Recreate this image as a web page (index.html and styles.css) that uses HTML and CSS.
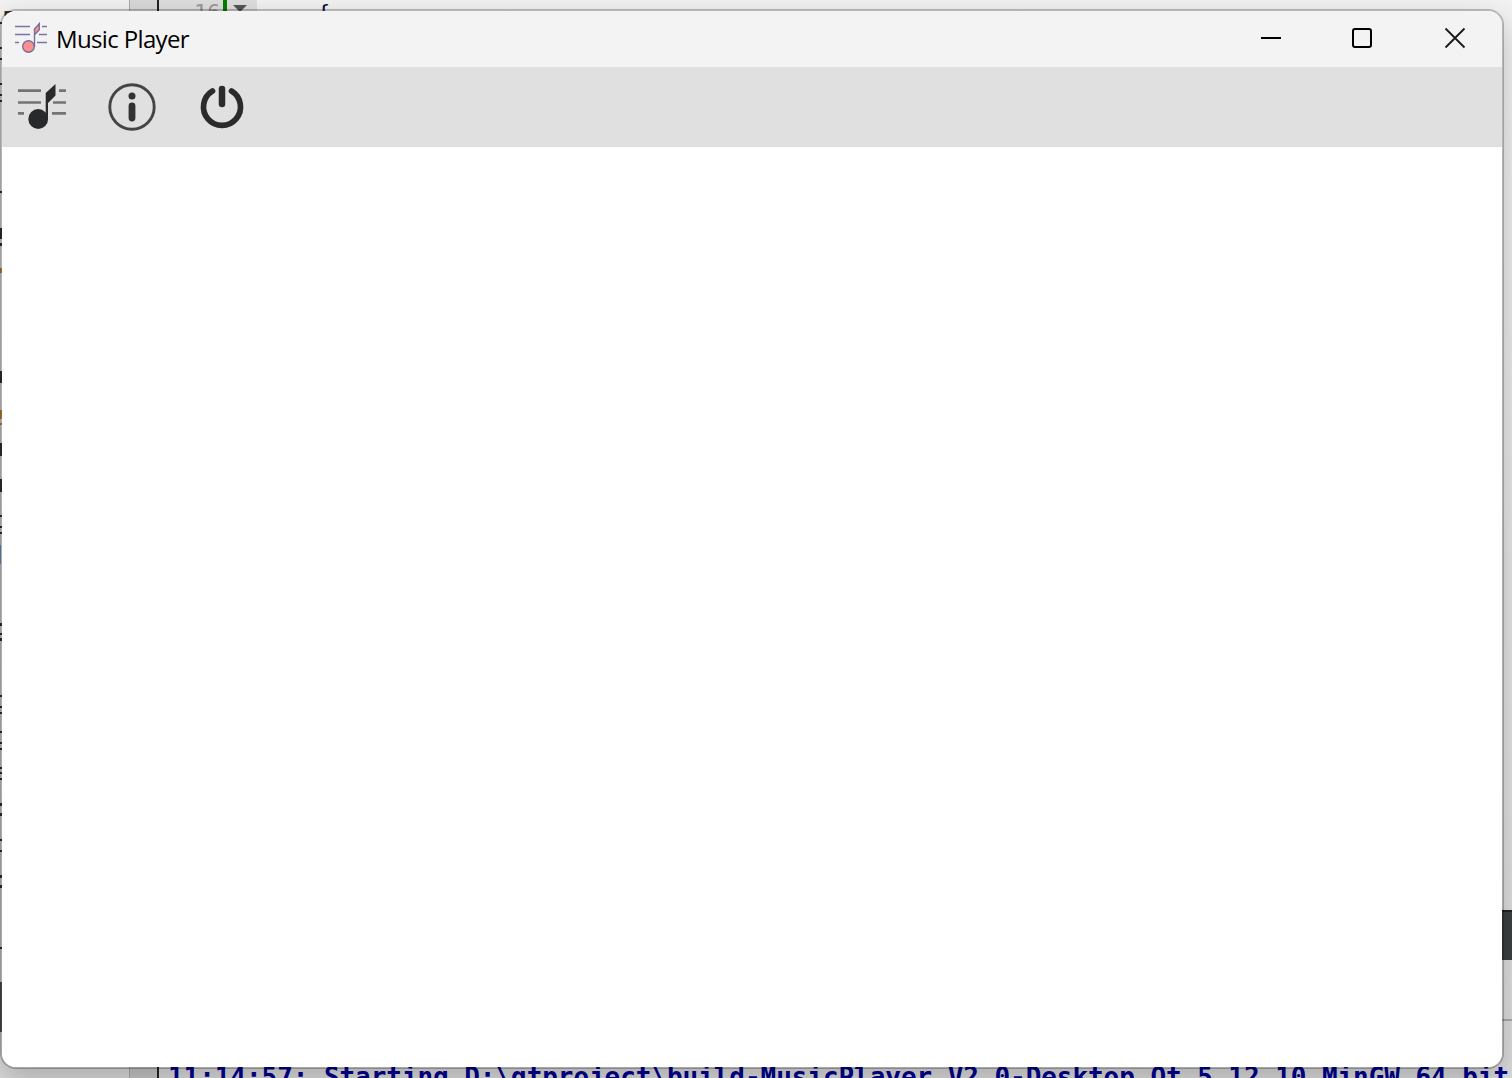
FILE: index.html
```html
<!DOCTYPE html>
<html lang="en">
<head>
    <meta charset="UTF-8">
    <title>Music Player</title>
    <link rel="stylesheet" href="styles.css">
</head>

<body>
    <!-- editor window behind the player -->
    <div class="editor">
        <div class="gutter"></div>
        <div class="line_numbers"><span class="line_no">16</span><span class="changed"></span><span class="fold"></span></div>
        <span class="code">{</span>
        <svg class="side_text" width="16" height="1078" viewBox="0 0 16 1078">
            <path fill="#c98a40" d="M0 268h2v5H0zM0 410h2v9H0zM0 423h2v2H0zM4 11h2v5H4z"/>
            <path fill="#6fa8dc" d="M0 545h1v19H0z"/>
            <path fill="#333" d="M0 22h2v2H0zM0 47h2v2H0zM0 58h2v2H0zM0 83h2v2H0zM0 94h2v2H0zM0 100h2v2H0zM0 191h2v2H0zM0 228h2v11H0zM0 243h2v3H0zM0 371h2v12H0zM0 443h2v13H0zM0 479h2v13H0zM0 515h2v2H0zM0 526h2v2H0zM0 532h2v2H0zM0 623h2v3H0zM0 633h2v2H0zM0 638h2v3H0zM0 695h2v2H0zM0 706h2v2H0zM0 712h2v2H0zM0 731h2v2H0zM0 742h2v2H0zM0 748h2v2H0zM0 767h2v2H0zM0 772h2v2H0zM0 778h2v2H0zM0 803h2v3H0zM0 813h2v3H0zM0 839h2v2H0zM0 850h2v2H0zM0 875h2v3H0zM0 885h2v3H0zM0 947h2v2H0zM5 11h8v2H8l-3 4z"/>
            <path fill="#555" d="M0 982h2v50H0z"/>
        </svg>
        <div class="scrollbar"></div>
        <div class="divider"></div>
        <div class="output">11:14:57: Starting D:\qtproject\build-MusicPlayer_V2_0-Desktop_Qt_5_12_10_MinGW_64_bit-</div>
    </div>

    <div class="window">
        <div class="title_bar">
            <svg class="app_icon" width="34" height="34" viewBox="0 0 34 34">
                <path d="M1 5.500h15M28 5.500h5M1 13.500h15M25 13.500h8M1 21.500h4M23 21.500h10" stroke="#7774a5" stroke-width="1.500"/>
                <circle cx="14.500" cy="25.500" r="5.800" fill="#ff8f8f" stroke="#74719f" stroke-width="1.400"/>
                <path d="M20.500 26V8l4.800-5.500v6.300l-4.800 5" fill="#ff8f8f" stroke="#74719f" stroke-width="1.400"/>
            </svg>
            <span class="title">Music Player</span>
            <svg class="controls" width="194" height="20" viewBox="0 0 194 20" fill="none">
                <path d="M0 10h20" stroke="#000" stroke-width="2"/>
                <rect x="92" y="1" width="18" height="18" rx="2" stroke="#000" stroke-width="2"/>
                <path d="M184.500.500l19 19M203.500.500l-19 19" stroke="#191919" stroke-width="1.800"/>
            </svg>
        </div>
        <div class="tool_bar">
            <svg width="48" height="48" viewBox="0 0 48 48">
                <path d="M0 7.700h23M41 7.700h7M0 19.500h23M35 19.500h13M0 30.300h6M34 30.300h14" stroke="#727373" stroke-width="2.700"/>
                <circle cx="20.200" cy="36" r="9.900" fill="#27292b"/>
                <path d="M27.700 37V10L37.500 1v11.500L30 20v17z" fill="#27292b"/>
            </svg>
            <svg width="48" height="48" viewBox="0 0 48 48">
                <circle cx="24" cy="24" r="22.200" fill="none" stroke="#434546" stroke-width="2.900"/>
                <circle cx="24" cy="13" r="3.500" fill="#303234"/>
                <path d="M24 23v12" stroke="#303234" stroke-width="6.800" stroke-linecap="round"/>
            </svg>
            <svg width="48" height="48" viewBox="0 0 48 48" fill="none" stroke="#292b2d" stroke-linecap="round">
                <path d="M14.500 8A18.500 18.500 0 1 0 33.500 8" stroke-width="5.700"/>
                <path d="M24 6v15" stroke-width="6.500"/>
            </svg>
        </div>
        <div class="content"></div>
    </div>
</body>
</html>
```
FILE: styles.css
```css
* {
    box-sizing: border-box;
}
body {
    margin: 0;
    height: 1078px;
    overflow: hidden;
    position: relative;
    background-color: #f7f7f7;
}

/* editor in the background */
.editor {
    position: absolute;
    inset: 0;
    overflow: hidden;
    background: linear-gradient(#f2f2f2, #e6e6e6 50%, #dcdcdc);
}
.gutter {
    position: absolute;
    left: 129px;
    width: 30px;
    height: 100%;
    background: linear-gradient(#d9d9d9, #c8c8c8);
    border-left: 1px solid #aaa;
    border-right: 2px solid #222;
}
.line_numbers {
    position: absolute;
    left: 159px;
    top: 0;
    width: 98px;
    height: 11px;
    overflow: hidden;
    background-color: #dedede;
}
.line_no {
    position: absolute;
    left: 35px;
    top: 1px;
    font: 22px/24px "DejaVu Sans Mono", monospace;
    color: #999;
}
.changed {
    position: absolute;
    left: 64px;
    width: 4px;
    height: 11px;
    background-color: #008000;
}
.fold {
    position: absolute;
    left: 74px;
    top: 5px;
    border: 7px solid transparent;
    border-top-color: #555;
    border-bottom: 0;
}
.code {
    position: absolute;
    left: 317px;
    top: 1px;
    font: 22px/24px "DejaVu Sans Mono", monospace;
    color: #101040;
}
.side_text {
    position: absolute;
    left: 0;
    top: 0;
}
.scrollbar {
    position: absolute;
    left: 1500px;
    top: 910px;
    width: 12px;
    height: 50px;
    background-color: #3c4040;
    border-top: 2px solid #222;
}
.divider {
    position: absolute;
    left: 1490px;
    top: 1019px;
    width: 22px;
    height: 2px;
    background-color: #aaa;
}
.output {
    position: absolute;
    left: 168px;
    top: 1062px;
    font: bold 26px/30px "DejaVu Sans Mono", monospace;
    letter-spacing: -0.06px;
    white-space: pre;
    color: #000090;
}

/* player window */
.window {
    position: absolute;
    left: 0;
    top: 9px;
    width: 1504px;
    height: 1060px;
    display: flex;
    flex-direction: column;
    overflow: hidden;
    background-color: #fff;
    background-clip: padding-box;
    border: 2px solid rgba(0, 0, 0, 0.24);
    border-radius: 16px;
    box-shadow: 0 12px 30px rgba(0, 0, 0, 0.22);
}
.title_bar {
    display: flex;
    align-items: center;
    height: 56px;
    padding: 0 37px 0 12px;
    background-color: #f3f3f3;
}
.app_icon {
    margin-top: -3px;
}
.title {
    margin-left: 8px;
    margin-top: -1px;
    font: 24px/32px "Open Sans", "Noto Sans", sans-serif;
    letter-spacing: -0.64px;
    color: #000;
}
.controls {
    margin-left: auto;
    margin-right: 10px;
    margin-top: -2px;
    overflow: visible;
}
.tool_bar {
    display: flex;
    align-items: center;
    gap: 42px;
    height: 80px;
    padding-left: 16px;
    background-color: #e0e0e0;
}
.content {
    flex: 1;
    background-color: #fff;
}
```
